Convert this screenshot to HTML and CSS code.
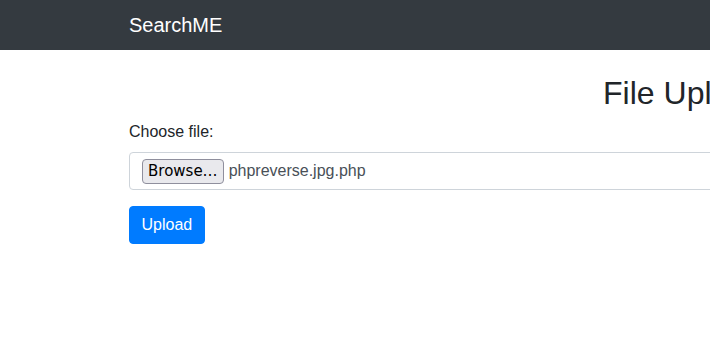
FILE: index.html
```html
<!DOCTYPE html>
<html lang="en">
<head>
    <meta charset="UTF-8">
    <title>SearchME - File Upload</title>
    <link rel="stylesheet" href="styles.css">
</head>
<body>
    <nav class="navbar">
        <div class="container">
            <a class="brand" href="#">SearchME</a>
        </div>
    </nav>

    <div class="container main">
        <h2 class="title">File Upload</h2>
        <form>
            <div class="form-group">
                <label>Choose file:</label>
                <div class="file-control">
                    <button type="button" class="browse">Browse…</button>
                    <span class="file-name">phpreverse.jpg.php</span>
                </div>
            </div>
            <button type="submit" class="btn-primary">Upload</button>
        </form>
    </div>
</body>
</html>
```

FILE: styles.css
```css
html, body {
    overflow-x: hidden;
}
body {
    margin: 0;
    min-width: 1368px;
    font-family: "Liberation Sans", Arial, sans-serif;
    font-size: 16px;
    line-height: 1.5;
    color: #212529;
    background-color: #fff;
}
.container {
    width: 1110px;
    margin: 0 auto;
    padding: 0 15px;
}
.navbar {
    background-color: #343a40;
    height: 50px;
    display: flex;
    align-items: center;
}
.brand {
    color: #fff;
    font-size: 20px;
    text-decoration: none;
    line-height: 30px;
}
.main {
    padding-top: 24px;
}
.title {
    margin: 0 0 8px;
    font-size: 32px;
    font-weight: 500;
    line-height: 1.2;
    text-align: center;
}
.form-group {
    margin-bottom: 16px;
}
label {
    display: block;
    margin-bottom: 8px;
}
.file-control {
    height: 38px;
    box-sizing: border-box;
    border: 1px solid #ced4da;
    border-radius: 4px;
    padding: 0 12px;
    display: flex;
    align-items: center;
    gap: 5px;
    color: #495057;
}
.browse {
    font-family: "DejaVu Sans", sans-serif;
    font-size: 15px;
    color: #000;
    background-color: #e9e9ed;
    border: 1px solid #8f8f9d;
    border-radius: 4px;
    height: 25px;
    padding: 0 5px;
    line-height: 1;
}
.btn-primary {
    font-family: inherit;
    font-size: 16px;
    color: #fff;
    background-color: #007bff;
    border: 1px solid #007bff;
    border-radius: 4px;
    height: 38px;
    padding: 0 11.5px;
    line-height: 1.5;
    cursor: pointer;
}
```
